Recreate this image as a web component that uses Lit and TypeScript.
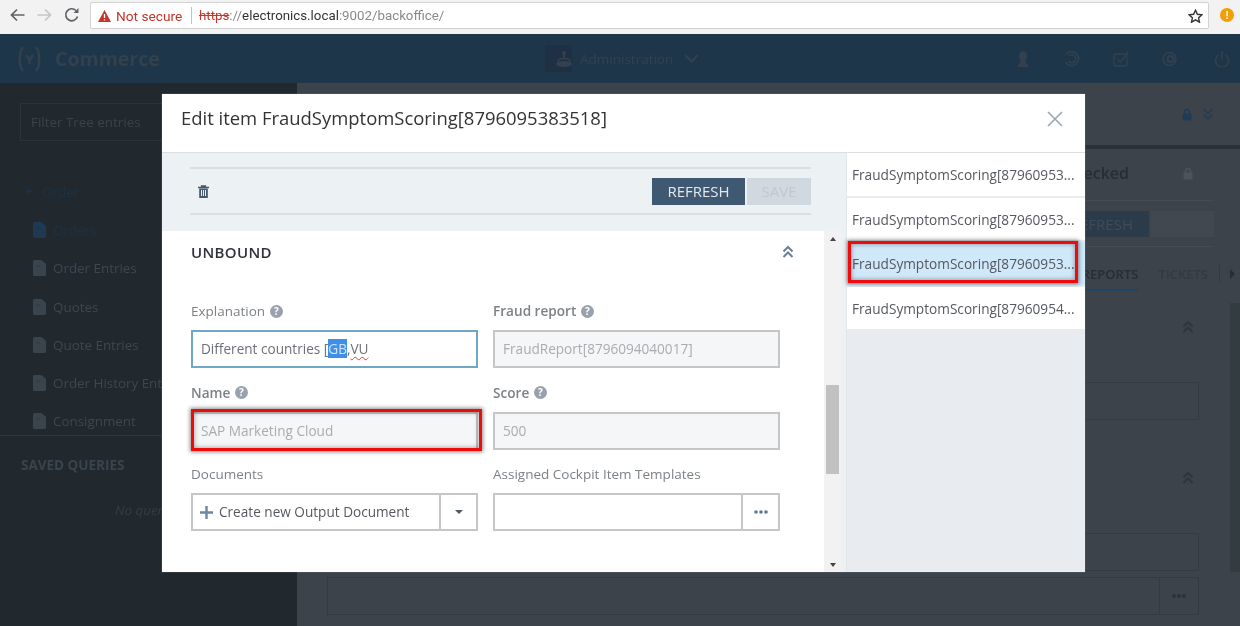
import { LitElement, html, css, svg } from "lit";
import { customElement } from "lit/decorators.js";

const ic = (w: number, h: number, body: unknown, vb = `0 0 ${w} ${h}`) =>
  html`<svg width=${w} height=${h} viewBox=${vb} style="flex:none;display:block">${body}</svg>`;

const help = () =>
  ic(13, 13, svg`<circle cx="6.500" cy="6.500" r="6.500" fill="#98a1ad"/><text x="6.500" y="10.300" text-anchor="middle" font-family="Open Sans" font-weight="700" font-size="10" fill="#fff">?</text>`);
const chevUp = (c: string) =>
  ic(12, 14, svg`<path d="M1.500 6.500 6 2l4.500 4.500M1.500 12 6 7.500l4.500 4.500" fill="none" stroke=${c} stroke-width="2"/>`);
const chevDown = (c: string) =>
  ic(12, 14, svg`<path d="M1.500 2 6 6.500 10.500 2M1.500 7.500 6 12l4.500-4.500" fill="none" stroke=${c} stroke-width="2"/>`);
const lock = (c: string) =>
  ic(10, 13, svg`<path d="M2.500 6V4a2.500 2.500 0 0 1 5 0v2" fill="none" stroke=${c} stroke-width="1.500"/><rect x="0.500" y="5.500" width="9" height="7" rx="1" fill=${c}/>`);
const doc = (c: string) =>
  ic(13, 16, svg`<path d="M1.500 0H8.500l4.500 4v10.500a1.500 1.500 0 0 1-1.500 1.500h-10A1.500 1.500 0 0 1 0 14.500v-13A1.500 1.500 0 0 1 1.500 0z" fill=${c}/><path d="M3 6h4" stroke="#21292f" stroke-opacity=".4"/>`);

@customElement("app-root")
export class AppRoot extends LitElement {
  static styles = css`
    :host { display: block; width: 1240px; height: 626px; overflow: hidden; position: relative; font-family: "Open Sans", sans-serif; background: #21292f; }
    .soft { filter: blur(0.4px); width: 1240px; height: 626px; position: relative; overflow: hidden; }

    .chrome { height: 34px; box-sizing: border-box; background: #f2f2f2; display: flex; align-items: flex-start; padding: 2px 0 0 10px; font-family: "Roboto", "Liberation Sans", sans-serif; }
    .nav { display: flex; align-items: center; height: 26px; gap: 12px; width: 80px; flex: none; }
    .omni { width: 1119px; height: 27px; flex: none; box-sizing: border-box; background: #fff; border: 1px solid #d2d2d2; border-radius: 2px; display: flex; align-items: center; padding: 0 5px 0 7px; font-size: 13.300px; }
    .ns { color: #c5352b; margin-left: 5px; width: 75px; flex: none; font-size: 13.700px; }
    .sep { width: 1px; height: 17px; background: #c4c4c4; margin-right: 7px; flex: none; }
    .url { color: #8a8a8a; flex: 1; }
    .url s { color: #c5352b; text-decoration-color: #c5352b; }
    .url b { color: #333; font-weight: 400; }
    .badge { width: 14px; height: 14px; margin: 6px 0 0 11px; border-radius: 50%; background: #f29f05; color: #fff; font: 700 11px/14px "Liberation Sans", sans-serif; text-align: center; flex: none; }

    .head { height: 49px; background: #1e3649; display: flex; align-items: center; box-sizing: border-box; padding-left: 17px; color: #33414e; }
    .logo { display: flex; align-items: center; gap: 13px; width: 528px; flex: none; }
    .brand { font-size: 19.500px; font-weight: 700; line-height: 30px; color: #33414d; }
    .admin { display: flex; align-items: center; width: 472px; flex: none; font-size: 13.500px; color: #33424f; }
    .admin svg:last-child { margin-left: 11px; }
    .adminbox { width: 27px; height: 27px; background: #1f3045; display: flex; align-items: center; justify-content: center; margin-right: 8px; }
    .hicons { display: flex; align-items: center; gap: 33px; }
    .hicons svg:last-child { margin-left: 3px; }

    .body { display: flex; height: 543px; }
    .side { width: 297px; flex: none; background: #21292f; box-sizing: border-box; padding: 20px 0 0 0; color: #3d4750; font-size: 13.400px; position: relative; }
    .filter { width: 260px; height: 38px; margin-left: 20px; box-sizing: border-box; border: 1px solid #2a343c; padding-left: 10px; line-height: 36px; color: #38434c; }
    .tree { padding-top: 32px; }
    .tr { height: 38.200px; display: flex; align-items: center; white-space: nowrap; gap: 7px; padding-left: 33px; }
    .tr.root { padding-left: 25px; gap: 9px; color: #1c3244; }
    .tr.sel { color: #1c3244; }
    .divider { height: 1px; background: #2b363e; margin-top: -5px; }
    .saved { font-weight: 700; font-size: 13.500px; margin: 19px 0 0 21px; color: #3a444d; line-height: 20px; }
    .noq { font-style: italic; margin: 25px 0 0 115px; line-height: 20px; color: #333d46; }

    .main { flex: 1; background: #3c434b; position: relative; color: #2d353d; overflow: hidden; }
    .top { height: 62px; display: flex; justify-content: flex-end; align-items: center; gap: 10px; padding: 0 26px 0 0; box-sizing: border-box; }
    .bar { height: 4px; background: #2a3239; }
    .titlerow { height: 48px; display: flex; justify-content: flex-end; align-items: center; padding-right: 47px; }
    .titlerow span { font-size: 16px; font-weight: 600; margin-right: 54px; color: #262e35; }
    .btns { margin: 3px 26px 0 30px; border-top: 1px solid #444b53; border-bottom: 1px solid #444b53; height: 47px; display: flex; justify-content: flex-end; align-items: center; gap: 2px; box-sizing: border-box; }
    .bt { height: 26px; line-height: 26px; text-align: center; font-size: 15px; }
    .bt.a { width: 110px; background: #2c3b49; color: #3e4c58; text-align: right; padding-right: 16px; box-sizing: border-box; }
    .bt.b { width: 63px; background: #41484f; }
    .tabs { margin-top: 18px; height: 26px; display: flex; justify-content: flex-end; align-items: flex-start; font-size: 13px; font-weight: 600; padding-right: 5px; color: #333a41; line-height: 18px; }
    .tabs .r { height: 26px; line-height: 18px; box-sizing: border-box; border-bottom: 2px solid #1f4466; margin-right: 20px; width: 110px; text-align: right; color: #242e37; }
    .tabs .t { margin-right: 1px; }
    .tabs .s { width: 1px; height: 18px; background: #333a42; margin: 0 10px; }
    .arrow { width: 0; height: 0; margin-top: 4px; border-left: 5px solid #262d33; border-top: 5px solid transparent; border-bottom: 5px solid transparent; }
    .cv { display: flex; justify-content: flex-end; padding-right: 46px; }
    .box { margin: 0 41px 0 30px; height: 38px; border: 1px solid #333a42; box-sizing: border-box; display: flex; justify-content: flex-end; align-items: center; }
    .dots { width: 38px; border-left: 1px solid #333a42; height: 100%; display: flex; align-items: center; justify-content: center; }
    .track { position: absolute; right: 0; top: 220px; bottom: 54px; width: 10px; background: #333c41; }

    .modal { position: absolute; left: 162px; top: 94px; width: 923px; height: 478px; background: #fff; box-shadow: 0 0 1px #8b9197; display: flex; flex-direction: column; }
    .mh { height: 59px; flex: none; box-sizing: border-box; border-bottom: 1px solid #dde0e3; display: flex; align-items: center; justify-content: space-between; padding: 0 23px 8px 19px; font-size: 18.450px; color: #333; }
    .mh span { margin-top: -4px; }
    .mh svg { margin-right: -1px; }
    .mb { flex: 1; display: flex; min-height: 0; }
    .left { width: 684px; flex: none; display: flex; flex-direction: column; background: #ecf1f4; border-right: 1px solid #e2e7ea; box-sizing: content-box; }
    .tool { height: 78px; flex: none; box-sizing: border-box; padding: 14px 35px 0 28px; }
    .toolin { height: 48px; border-top: 2px solid #dadfe2; border-bottom: 2px solid #dadfe2; box-sizing: border-box; display: flex; align-items: center; justify-content: space-between; padding: 0 0 0 8px; }
    .tb { display: flex; gap: 2px; }
    .refresh { width: 93px; height: 27px; background: #3f5972; color: #e3e8ec; font-size: 15px; line-height: 27px; text-align: center; }
    .save { width: 64px; height: 27px; background: #d0d8e0; color: #bfc7cf; font-size: 15px; line-height: 27px; text-align: center; }
    .scroll { flex: 1; display: flex; min-height: 0; }
    .pane { width: 662px; flex: none; background: #fff; box-sizing: border-box; padding: 0 21px 0 29px; }
    .sech { height: 41px; display: flex; align-items: center; justify-content: space-between; padding: 0 9px 0 0; font-size: 15px; font-weight: 600; color: #2f3338; letter-spacing: .35px; }
    .grid { display: grid; grid-template-columns: 287px 287px; column-gap: 15px; row-gap: 15.500px; margin-top: 30px; }
    .f { position: relative; }
    .lab { height: 18px; line-height: 18px; display: flex; align-items: center; gap: 5px; font-size: 13.500px; color: #7d8286; margin-bottom: 10px; }
    .lab.bold { font-weight: 600; font-size: 13.600px; }
    .in { height: 38px; box-sizing: border-box; border: 2px solid #c4c6c8; padding: 0 8px; line-height: 34px; font-size: 13.600px; color: #6c7075; white-space: nowrap; display: flex; align-items: center; }
    .in.ro { background: #f4f6f7; color: #a9adb1; }
    .in.focus { border-color: #6ea8c6; }
    .gb { background: #3d8fe8; color: #cfe4fa; }
    .vu { text-decoration: underline wavy #d8413a 1px; text-underline-offset: 2px; }
    .mark { position: absolute; box-sizing: border-box; border: 3px solid #f10a0a; box-shadow: 0 0 4px 1px rgba(0,0,0,.45), inset 0 0 5px rgba(0,0,0,.4); pointer-events: none; }
    .mark.name { left: 0; top: 25px; width: 291px; height: 42px; }
    .mark.item { left: 1px; top: -1px; width: 230px; height: 42px; }
    .create { padding: 0; color: #55595e; }
    .create .t { flex: 1; display: flex; align-items: center; gap: 6px; padding-left: 7px; height: 100%; }
    .create .c { width: 37px; height: 100%; border-left: 2px solid #c4c6c8; box-sizing: border-box; display: flex; align-items: center; justify-content: center; flex: none; }
    .caret { width: 0; height: 0; border-left: 4px solid transparent; border-right: 4px solid transparent; border-top: 4px solid #4e5a66; }
    .sb { width: 17px; flex: none; background: #f2f2f2; display: flex; flex-direction: column; align-items: center; justify-content: space-between; box-sizing: border-box; padding: 6px 0 5px; position: relative; }
    .up { width: 0; height: 0; border-left: 3.500px solid transparent; border-right: 3.500px solid transparent; border-bottom: 4px solid #444; }
    .dn { width: 0; height: 0; border-left: 3.500px solid transparent; border-right: 3.500px solid transparent; border-top: 4px solid #444; }
    .thumb { position: absolute; left: 2px; top: 154px; width: 13px; height: 89px; background: #c1c1c1; }
    .gut { width: 5px; flex: none; background: #ecf1f4; }
    .list { flex: 1; min-width: 0; background: #e8ebef; }
    .it { height: 42.500px; margin-bottom: 2px; background: #fff; padding-left: 5px; font-size: 13.650px; line-height: 43px; color: #55595e; white-space: nowrap; position: relative; }
    .it.s { background: #cfe8fa; }
    .it.last { margin-bottom: 0; }
  `;

  render() {
    const items = [
      { n: "Orders", sel: true },
      { n: "Order Entries" },
      { n: "Quotes" },
      { n: "Quote Entries" },
      { n: "Order History Entries" },
      { n: "Consignment" },
    ];
    const h = "#33414e";
    return html`<div class="soft">
      <div class="chrome">
        <div class="nav">
          ${ic(15, 14, svg`<path d="M14.500 7H1.500M7 1.500 1.500 7 7 12.500" fill="none" stroke="#5f6368" stroke-width="1.700"/>`)}
          ${ic(15, 14, svg`<path d="M.5 7h13M8 1.500 13.500 7 8 12.500" fill="none" stroke="#c4c6c9" stroke-width="1.700"/>`)}
          ${ic(16, 16, svg`<path d="M13.500 9.500A6 6 0 1 1 12 3.500" fill="none" stroke="#5f6368" stroke-width="1.700"/><path d="M14.500 1v5h-5z" fill="#5f6368"/>`)}
        </div>
        <div class="omni">
          ${ic(13, 12, svg`<path d="M6.500 0 13 12H0z" fill="#c5352b"/><path d="M6.500 4v4M6.500 9.200v1.300" stroke="#fff" stroke-width="1.300"/>`)}
          <span class="ns">Not secure</span>
          <span class="sep"></span>
          <span class="url"><s>https</s>://<b>electronics.local</b>:9002/backoffice/</span>
          ${ic(15, 14, svg`<path d="M7.500 1.200 9.400 5.300l4.500.5-3.300 3 .9 4.400-4-2.300-4 2.300.9-4.400-3.300-3 4.500-.5z" fill="none" stroke="#333" stroke-width="1.400"/>`)}
        </div>
        <div class="badge">!</div>
      </div>

      <div class="head">
        <div class="logo">
          ${ic(25, 26, svg`<path d="M6 1C2 6 1.500 20 6 25M19 1c4 5 4.500 19 0 24" fill="none" stroke=${h} stroke-width="2.400"/><path d="M9 9l3.500 5 3.500-5M12.500 14v4" fill="none" stroke=${h} stroke-width="2.200"/>`)}
          <span class="brand">Commerce</span>
        </div>
        <div class="admin">
          <div class="adminbox">${ic(18, 18, svg`<circle cx="9" cy="3" r="2" fill=${h}/><path d="M8 4h2v5H8z" fill=${h}/><ellipse cx="9" cy="11" rx="6" ry="2.500" fill="none" stroke=${h} stroke-width="1.500"/><ellipse cx="9" cy="14" rx="8" ry="3" fill=${h}/>`)}</div>
          <span>Administration</span>
          ${ic(15, 9, svg`<path d="M1 1l6.500 6.500L14 1" fill="none" stroke=${h} stroke-width="2"/>`)}
        </div>
        <div class="hicons" style="margin-left:-2px">
          ${ic(16, 16, svg`<ellipse cx="8" cy="5" rx="4" ry="5" fill=${h}/><path d="M5.500 8h5l.5 4 2 2v2H3v-2l2-2z" fill=${h}/>`)}
          ${ic(16, 16, svg`<path d="M2 3.500A7 7 0 1 1 1.500 11" fill="none" stroke=${h} stroke-width="1.600"/><path d="M5 5a4 4 0 1 1-.5 5" fill="none" stroke=${h} stroke-width="1.600"/>`)}
          ${ic(16, 16, svg`<rect x="1" y="3" width="13" height="12" rx="1.500" fill="none" stroke=${h} stroke-width="1.300"/><path d="M4.500 8l3 3.500L15 1" fill="none" stroke=${h} stroke-width="1.300"/>`)}
          ${ic(16, 16, svg`<circle cx="7.500" cy="8" r="6.500" fill="none" stroke=${h} stroke-width="1.600"/><circle cx="8.500" cy="8" r="3" fill="none" stroke=${h} stroke-width="1.800"/>`)}
          ${ic(16, 16, svg`<path d="M4.500 4a6.500 6.500 0 1 0 7 0M8 0v8" fill="none" stroke=${h} stroke-width="1.600"/>`)}
        </div>
      </div>

      <div class="body">
        <div class="side">
          <div class="filter">Filter Tree entries</div>
          <div class="tree">
            <div class="tr root"><span class="caret" style="border-top-color:#1c3244"></span><span>Order</span></div>
            ${items.map(
              (i) => html`<div class="tr ${i.sel ? "sel" : ""}">${doc(i.sel ? "#1d3a52" : "#39444d")}<span>${i.n}</span></div>`
            )}
          </div>
          <div class="divider"></div>
          <div class="saved">SAVED QUERIES</div>
          <div class="noq">No queries</div>
        </div>

        <div class="main">
          <div class="top">${lock("#1f3c55")}${chevDown("#2b3c4c")}</div>
          <div class="bar"></div>
          <div class="titlerow"><span>Checked</span>${lock("#4c5359")}</div>
          <div class="btns">
            <div class="bt a">REFRESH</div>
            <div class="bt b"></div>
          </div>
          <div class="tabs">
            <span class="r">REPORTS</span><span class="t">TICKETS</span><span class="s"></span><span class="arrow"></span>
          </div>
          <div class="cv" style="margin-top:29px">${chevUp("#2d353d")}</div>
          <div class="box" style="margin-top:48px"></div>
          <div class="cv" style="margin-top:51px">${chevUp("#2d353d")}</div>
          <div class="box" style="margin-top:48px"></div>
          <div class="box" style="margin-top:6px">
            <div class="dots">${ic(14, 4, svg`<circle cx="2" cy="2" r="2" fill="#2b3238"/><circle cx="7" cy="2" r="2" fill="#2b3238"/><circle cx="12" cy="2" r="2" fill="#2b3238"/>`)}</div>
          </div>
          <div class="track"></div>
        </div>
      </div>

      <div class="modal">
        <div class="mh">
          <span>Edit item FraudSymptomScoring[8796095383518]</span>
          ${ic(16, 16, svg`<path d="M1 1l14 14M15 1 1 15" stroke="#9aa6b0" stroke-width="1.600" fill="none"/>`)}
        </div>
        <div class="mb">
          <div class="left">
            <div class="tool">
              <div class="toolin">
                ${ic(11, 13, svg`<path d="M0 2.500h11M3.500 2.500V1h4v1.500" fill="none" stroke="#46586b" stroke-width="1.300"/><path d="M1.200 3.500h8.600V13H1.200z" fill="#46586b"/><path d="M3.500 5v6M5.500 5v6M7.500 5v6" stroke="#ecf1f4"/>`)}
                <div class="tb"><div class="refresh">REFRESH</div><div class="save">SAVE</div></div>
              </div>
            </div>
            <div class="scroll">
              <div class="pane">
                <div class="sech"><span>UNBOUND</span>${chevUp("#6b7f93")}</div>
                <div class="grid">
                  <div class="f">
                    <div class="lab">Explanation ${help()}</div>
                    <div class="in focus"><span style="white-space:pre">Different countries [<span class="gb">GB</span>,<span class="vu">VU</span></span></div>
                  </div>
                  <div class="f">
                    <div class="lab bold">Fraud report ${help()}</div>
                    <div class="in ro">FraudReport[8796094040017]</div>
                  </div>
                  <div class="f">
                    <div class="lab bold">Name ${help()}</div>
                    <div class="in ro">SAP Marketing Cloud</div>
                    <div class="mark name"></div>
                  </div>
                  <div class="f">
                    <div class="lab bold">Score ${help()}</div>
                    <div class="in ro">500</div>
                  </div>
                  <div class="f">
                    <div class="lab">Documents</div>
                    <div class="in create">
                      <div class="t">${ic(13, 13, svg`<path d="M6.500 0v13M0 6.500h13" stroke="#6a87a3" stroke-width="2.400"/>`)}<span>Create new Output Document</span></div>
                      <div class="c"><span class="caret"></span></div>
                    </div>
                  </div>
                  <div class="f">
                    <div class="lab">Assigned Cockpit Item Templates</div>
                    <div class="in create">
                      <div class="t"></div>
                      <div class="c">${ic(14, 4, svg`<circle cx="2" cy="2" r="1.800" fill="#5f7891"/><circle cx="7" cy="2" r="1.800" fill="#5f7891"/><circle cx="12" cy="2" r="1.800" fill="#5f7891"/>`)}</div>
                    </div>
                  </div>
                </div>
              </div>
              <div class="sb"><span class="up"></span><div class="thumb"></div><span class="dn"></span></div>
              <div class="gut"></div>
            </div>
          </div>
          <div class="list">
            <div class="it">FraudSymptomScoring[87960953...</div>
            <div class="it">FraudSymptomScoring[87960953...</div>
            <div class="it s">FraudSymptomScoring[87960953...<div class="mark item"></div></div>
            <div class="it last">FraudSymptomScoring[87960954...</div>
          </div>
        </div>
      </div>
    </div>`;
  }
}
